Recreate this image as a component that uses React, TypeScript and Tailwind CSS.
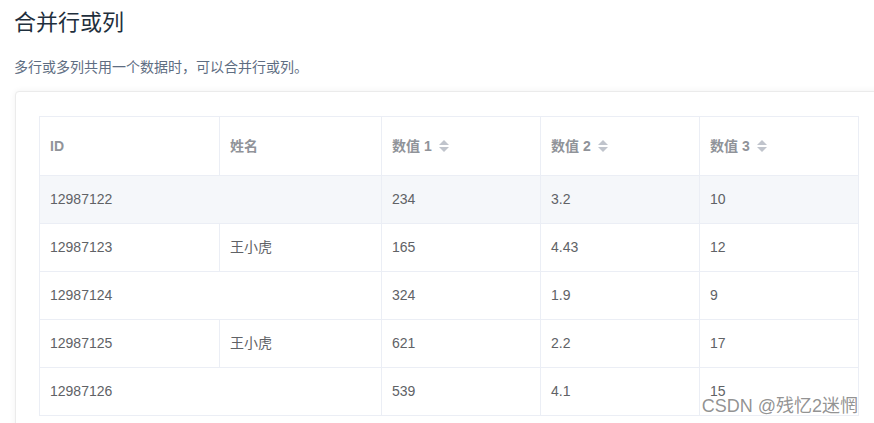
import React from 'react';

type Row = { id: string; name: string; a: string; b: string; c: string };

const rows: Row[] = [
  { id: '12987122', name: '王小虎', a: '234', b: '3.2', c: '10' },
  { id: '12987123', name: '王小虎', a: '165', b: '4.43', c: '12' },
  { id: '12987124', name: '王小虎', a: '324', b: '1.9', c: '9' },
  { id: '12987125', name: '王小虎', a: '621', b: '2.2', c: '17' },
  { id: '12987126', name: '王小虎', a: '539', b: '4.1', c: '15' },
];

// up / down carets like el-table sort wrapper
function SortCaret() {
  return (
    <svg width="10" height="12" viewBox="0 0 10 12" className="ml-[7px] inline-block align-[-1px]">
      <polygon points="0,5 5,0 10,5" fill="#c0c4cc" />
      <polygon points="0,7 10,7 5,12" fill="#c0c4cc" />
    </svg>
  );
}

const cell = 'border border-[#ebeef5] px-[10px] text-left align-middle';

export default function App() {
  return (
    <div
      className="relative h-[423px] w-[874px] overflow-hidden bg-white pl-[14px] pt-[10px]"
      style={{ fontFamily: '"Liberation Sans", Arial, "Noto Sans CJK SC", sans-serif' }}
    >
      <h2 className="h-[26px] text-[22px] leading-[26px] font-normal text-[#1f2f3d]">合并行或列</h2>
      <p className="mt-[21px] text-[14px] leading-[20px] text-[#5e6d82]">多行或多列共用一个数据时，可以合并行或列。</p>

      <div className="ml-[1px] mt-[14px] w-[880px] rounded-[4px] border border-[#ebebeb] bg-white pb-[24px] pl-[23px] pr-[24px] pt-[24px] shadow-[0_0_6px_rgba(0,0,0,0.06)]">
        <table className="w-[819px] table-fixed border-collapse text-[14px] text-[#606266]">
          <colgroup>
            <col className="w-[180px]" />
            <col className="w-[162px]" />
            <col className="w-[159px]" />
            <col className="w-[159px]" />
            <col className="w-[159px]" />
          </colgroup>
          <thead>
            <tr className="h-[59px] font-bold text-[#909399]">
              <th className={cell}>ID</th>
              <th className={cell}>姓名</th>
              <th className={cell}>数值 1<SortCaret /></th>
              <th className={cell}>数值 2<SortCaret /></th>
              <th className={cell}>数值 3<SortCaret /></th>
            </tr>
          </thead>
          <tbody>
            {rows.map((r, i) => (
              <tr key={r.id} className={i === 0 ? 'h-[48px] bg-[#f5f7fa]' : 'h-[48px]'}>
                {i % 2 === 0 ? (
                  <td className={cell} colSpan={2}>{r.id}</td>
                ) : (
                  <>
                    <td className={cell}>{r.id}</td>
                    <td className={cell}>{r.name}</td>
                  </>
                )}
                <td className={cell}>{r.a}</td>
                <td className={cell}>{r.b}</td>
                <td className={cell}>{r.c}</td>
              </tr>
            ))}
          </tbody>
        </table>
      </div>

      {/* site watermark */}
      <div className="absolute bottom-[6px] right-[16px] text-[18px] leading-[22px] text-[rgba(128,128,128,0.85)]">
        CSDN @残忆2迷惘
      </div>
    </div>
  );
}
